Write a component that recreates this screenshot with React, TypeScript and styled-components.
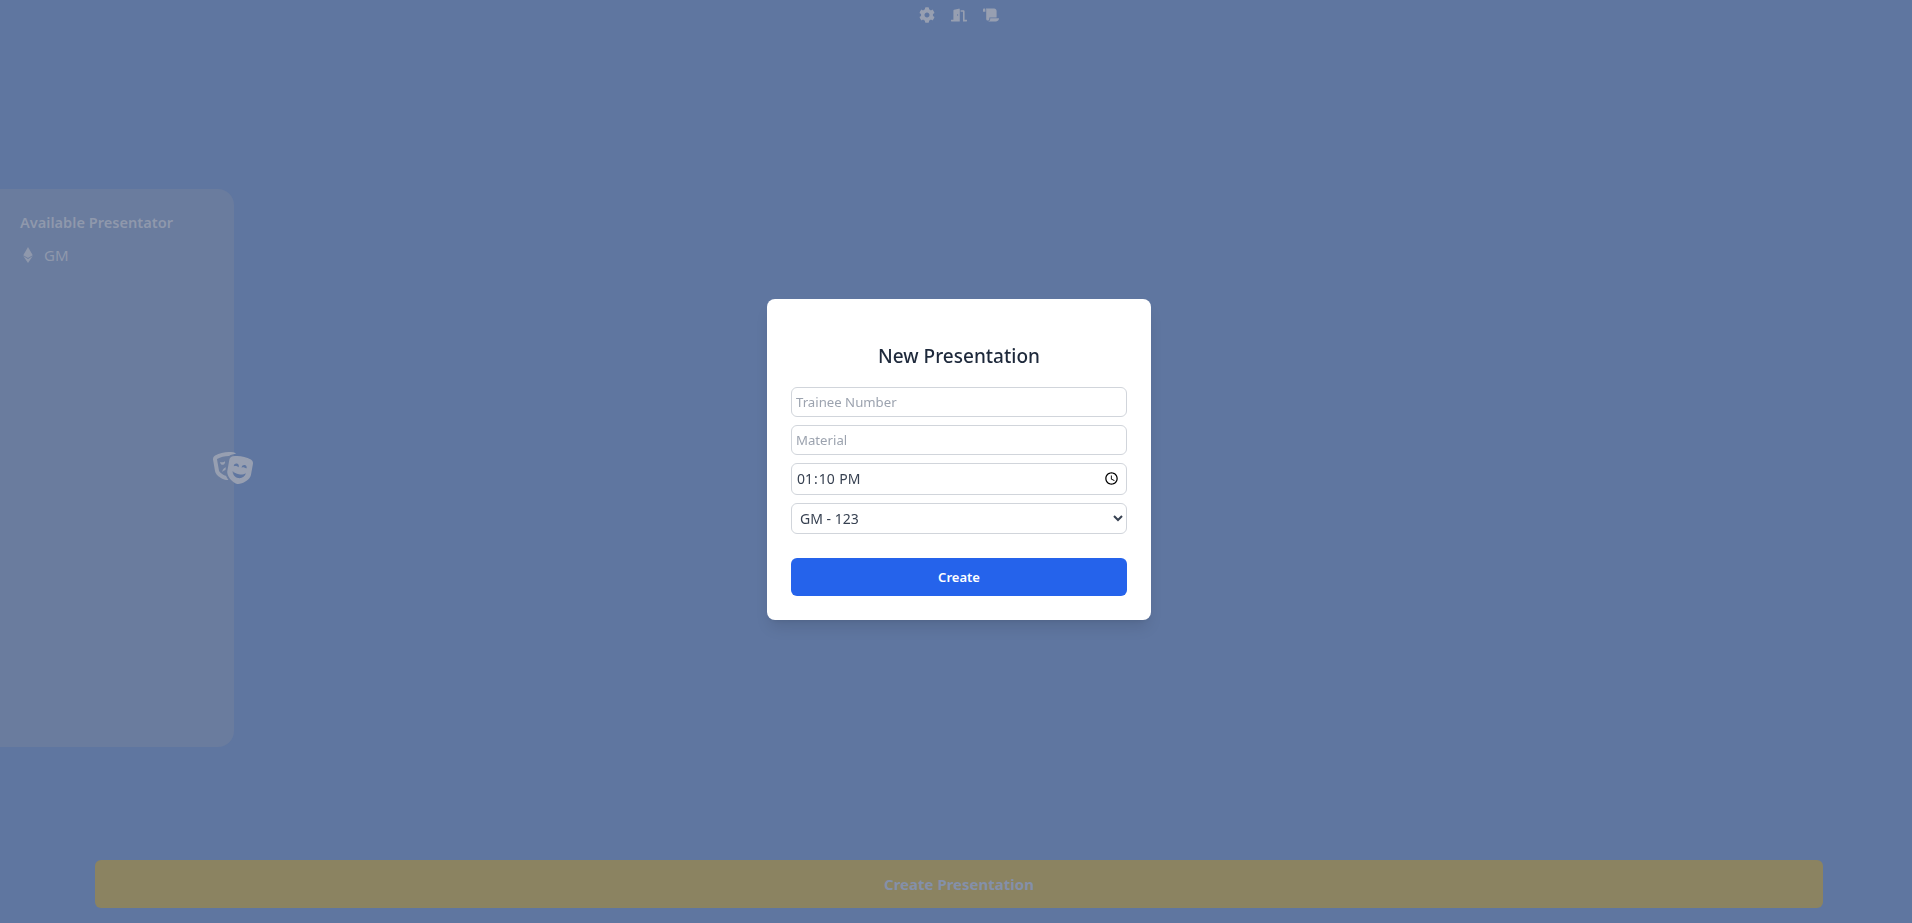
import styled, { createGlobalStyle } from 'styled-components';
import { FaCog, FaDoorOpen, FaEthereum, FaScroll, FaTheaterMasks } from 'react-icons/fa';

const colors = {
  page: '#5f76a0',
  panel: '#6a7c9e',
  muted: '#8f98ac',
  iconMuted: '#979fb1',
  gold: '#8b8361',
  goldText: '#8490aa',
  ink: '#1e293b',
  border: '#d1d5db',
  blue: '#2563eb',
};

const GlobalStyle = createGlobalStyle`
  html, body {
    margin: 0;
    padding: 0;
    background: ${colors.page};
    font-family: "Noto Sans", "Open Sans", sans-serif;
  }
  * {
    box-sizing: border-box;
  }
`;

const App = () => {
  return (
    <Page>
      <GlobalStyle />
      <TopBar>
        <FaCog size={16} />
        <FaDoorOpen size={16} />
        <FaScroll size={16} />
      </TopBar>

      <SidePanel>
        <PanelTitle>Available Presentator</PanelTitle>
        <PresenterRow>
          <FaEthereum size={16} />
          <span>GM</span>
        </PresenterRow>
        <PanelToggle>
          <FaTheaterMasks size={40} />
        </PanelToggle>
      </SidePanel>

      <CreateBar>Create Presentation</CreateBar>

      <Overlay>
        <Modal>
          <ModalTitle>New Presentation</ModalTitle>
          <Field type="text" placeholder="Trainee Number" />
          <Field type="text" placeholder="Material" />
          <TimeField type="time" defaultValue="13:10" />
          <SelectField defaultValue="gm">
            <option value="gm">GM - 123</option>
          </SelectField>
          <SubmitButton type="button">Create</SubmitButton>
        </Modal>
      </Overlay>
    </Page>
  );
};

export default App;

const Page = styled.div`
  display: flex;
  flex-direction: column;
  height: 923px;
  overflow: hidden;
  background: ${colors.page};
`;

const TopBar = styled.div`
  display: flex;
  justify-content: center;
  gap: 16px;
  height: 28px;
  padding: 7px 0 0 6px;
  color: ${colors.iconMuted};
`;

const SidePanel = styled.aside`
  position: relative;
  width: 234px;
  height: 558px;
  margin-top: 161px;
  padding: 19px 20px;
  border-radius: 0 16px 16px 0;
  background: ${colors.panel};
  color: ${colors.muted};
`;

const PanelTitle = styled.h2`
  margin: 0 0 9px;
  font-size: 14.6px;
  line-height: 28px;
  font-weight: 600;
`;

const PresenterRow = styled.div`
  display: flex;
  align-items: center;
  gap: 8px;
  font-size: 15px;
  line-height: 20px;

  & > svg {
    flex: none;
  }
`;

const PanelToggle = styled.div`
  position: absolute;
  top: 259px;
  left: 213px;
  display: flex;
  color: ${colors.iconMuted};
`;

const CreateBar = styled.div`
  display: flex;
  align-items: center;
  justify-content: center;
  height: 48px;
  margin: 113px 89px 0 95px;
  border-radius: 6px;
  background: ${colors.gold};
  color: ${colors.goldText};
  font-size: 15px;
  font-weight: 700;
`;

const Overlay = styled.div`
  position: fixed;
  inset: 0;
  display: flex;
  align-items: center;
  justify-content: center;
  padding: 0 0 5px 6px;
`;

const Modal = styled.form`
  display: flex;
  flex-direction: column;
  width: 384px;
  height: 321px;
  padding: 43px 24px 24px;
  border-radius: 8px;
  background: #ffffff;
  box-shadow: 0 10px 15px -3px rgba(0, 0, 0, 0.1), 0 4px 6px -4px rgba(0, 0, 0, 0.1);
`;

const ModalTitle = styled.h3`
  margin: 0 0 17px;
  color: ${colors.ink};
  font-size: 19px;
  line-height: 28px;
  font-weight: 500;
  text-align: center;
`;

const Field = styled.input`
  width: 100%;
  height: 30px;
  margin-bottom: 8px;
  padding: 0 4px;
  border: 1px solid ${colors.border};
  border-radius: 6px;
  background: #ffffff;
  color: #374151;
  font-family: inherit;
  font-size: 14px;
  outline: none;

  &::placeholder {
    color: #9ca3af;
    font-size: 13.2px;
  }
`;

const TimeField = styled(Field)`
  height: 32px;
`;

const SelectField = styled.select`
  width: 100%;
  height: 31px;
  padding: 0 4px;
  border: 1px solid ${colors.border};
  border-radius: 6px;
  background: #ffffff;
  color: #374151;
  font-family: inherit;
  font-size: 14px;
  outline: none;
`;

const SubmitButton = styled.button`
  height: 38px;
  margin-top: 24px;
  border: 0;
  border-radius: 6px;
  background: ${colors.blue};
  color: #ffffff;
  font-family: inherit;
  font-size: 13px;
  font-weight: 600;
`;
